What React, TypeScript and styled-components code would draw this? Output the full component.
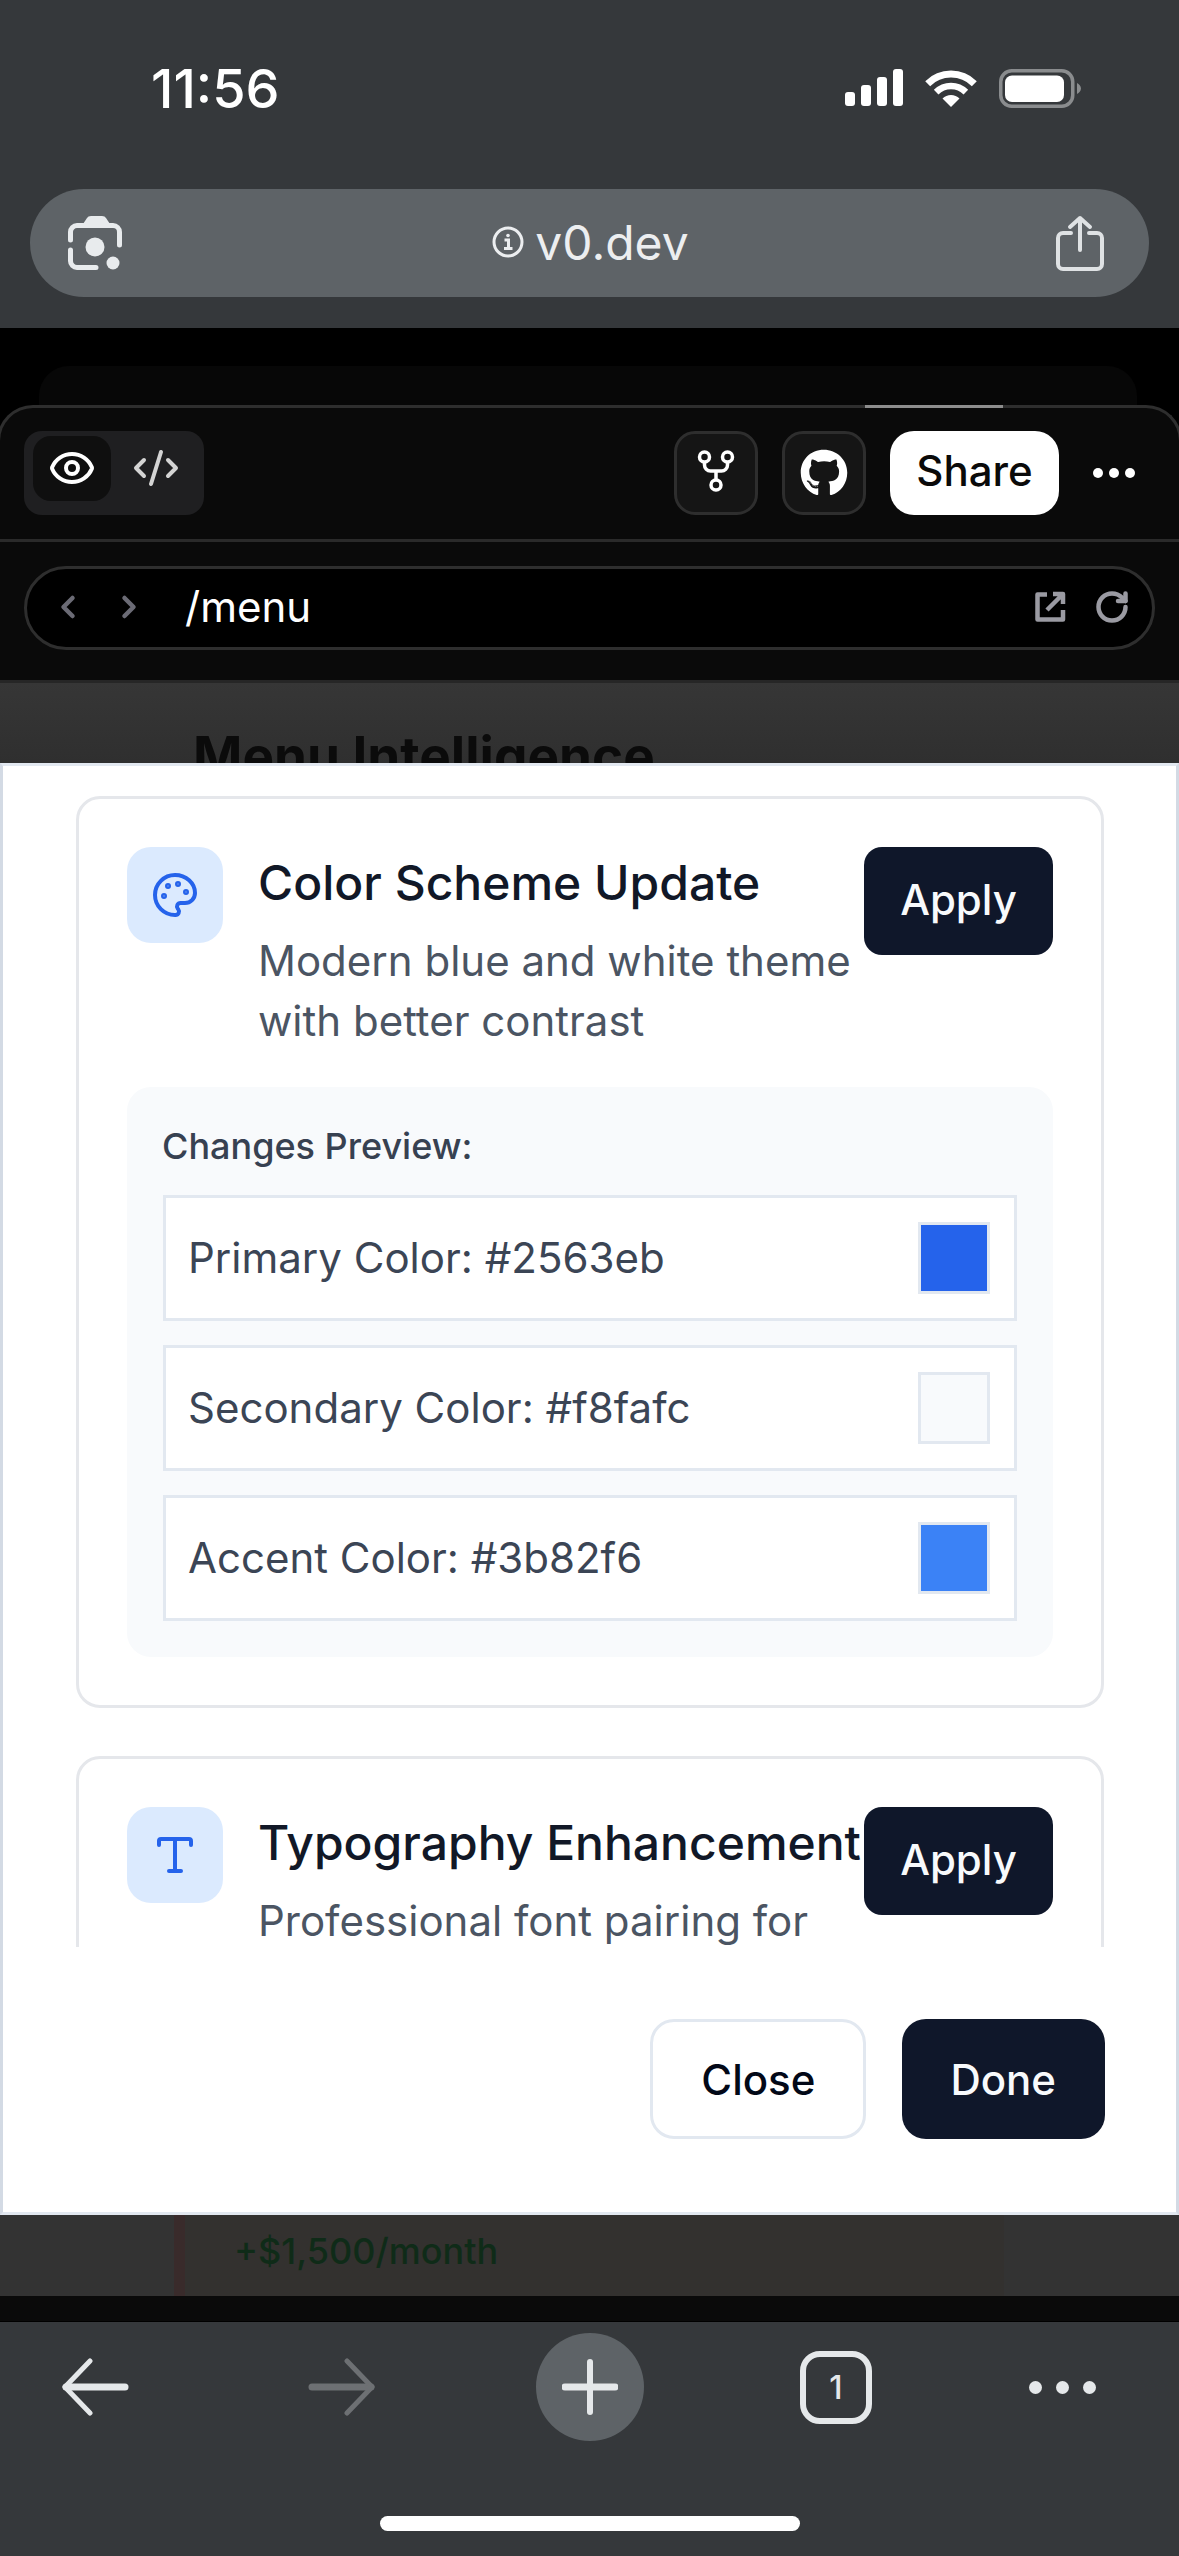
import React from 'react';
import styled, { createGlobalStyle } from 'styled-components';
import { ChevronLeft, ChevronRight, CodeXml, Eye, Palette, RotateCw, Type } from 'lucide-react';
import { FaGithub } from 'react-icons/fa';

const GlobalStyle = createGlobalStyle`
  html, body {
    margin: 0;
    padding: 0;
    background: #000;
  }
  * {
    box-sizing: border-box;
  }
`;

const Screen = styled.div`
  width: 1179px;
  height: 2556px;
  overflow: hidden;
  display: flex;
  flex-direction: column;
  background: #000;
  font-family: Inter, 'Liberation Sans', sans-serif;
`;

const BrowserTop = styled.header`
  height: 328px;
  background: #35383b;
`;

const StatusBar = styled.div`
  height: 189px;
  padding: 0 98px 13px 151px;
  display: flex;
  align-items: center;
  justify-content: space-between;
`;

const Clock = styled.span`
  font-size: 54px;
  font-weight: 500;
  color: #fff;
`;

const StatusIcons = styled.div`
  display: flex;
  align-items: center;
  gap: 22px;
`;

const UrlBar = styled.div`
  height: 108px;
  margin: 0 30px;
  padding: 0 44px 0 34px;
  border-radius: 54px;
  background: #5e6367;
  display: flex;
  align-items: center;
  justify-content: space-between;
`;

const UrlText = styled.div`
  display: flex;
  align-items: center;
  gap: 11px;
  padding-bottom: 2px;
  font-size: 48px;
  color: #eceef0;
`;

const Behind = styled.div`
  height: 77px;
  padding: 38px 42px 0 39px;
  background: #000;
`;

const BehindCard = styled.div`
  height: 39px;
  border-radius: 30px 30px 0 0;
  background: #070707;
`;

const Panel = styled.section`
  position: relative;
  flex: none;
  width: calc(100% + 6px);
  margin-left: -3px;
  background: #0a0a0a;
  border: 3px solid #2e2e2e;
  border-bottom: none;
  border-radius: 36px 36px 0 0;
`;

const Glint = styled.i`
  position: absolute;
  top: -3px;
  left: 865px;
  width: 138px;
  height: 3px;
  background: #8d8d8d;
`;

const ToolRow = styled.div`
  height: 134px;
  padding: 0 44px 2px 24px;
  display: flex;
  align-items: center;
  justify-content: space-between;
  border-bottom: 3px solid #2a2a2a;
`;

const ViewTabs = styled.div`
  width: 180px;
  height: 84px;
  padding: 5px 0 14px 9px;
  border-radius: 18px;
  background: #1f1f21;
  display: flex;
  gap: 6px;
  color: #d4d4d4;
`;

const ViewTab = styled.div<{ $active?: boolean }>`
  width: 78px;
  display: flex;
  align-items: center;
  justify-content: center;
  border-radius: 18px;
  background: ${(p) => (p.$active ? '#0f0f0f' : 'transparent')};
  color: ${(p) => (p.$active ? '#fff' : '#d4d4d4')};
`;

const Actions = styled.div`
  display: flex;
  align-items: center;
  gap: 24px;
`;

const IconButton = styled.button`
  width: 84px;
  height: 84px;
  padding: 0;
  border: 3px solid #2e2e2e;
  border-radius: 21px;
  background: #151515;
  color: #fff;
  display: flex;
  align-items: center;
  justify-content: center;
`;

const ShareButton = styled.button`
  width: 169px;
  height: 84px;
  border: none;
  border-radius: 24px;
  background: #fff;
  color: #0a0a0a;
  font-family: inherit;
  font-size: 42px;
  font-weight: 500;
  padding: 0 0 5px;
`;

const MoreDots = styled.div`
  display: flex;
  gap: 6px;
  margin-left: 10px;
`;

const Dot = styled.i`
  width: 10px;
  height: 10px;
  border-radius: 50%;
  background: #fff;
`;

const AddressRow = styled.div`
  height: 141px;
  padding: 24px 24px 0;
  border-bottom: 3px solid #262626;
`;

const AddressPill = styled.div`
  height: 84px;
  padding: 0 22px 2px 23px;
  border: 3px solid #2e2e2e;
  border-radius: 42px;
  background: #000;
  display: flex;
  align-items: center;
  gap: 25px;
  color: #6b6b75;
`;

const Path = styled.span`
  margin-left: 13px;
  padding-bottom: 2px;
  flex: 1;
  font-size: 42px;
  color: #fff;
`;

const PillTools = styled.div`
  display: flex;
  align-items: center;
  gap: 26px;
  color: #9a9aa2;
`;

const PeekTop = styled.div`
  flex: none;
  height: 80px;
  overflow: hidden;
  padding: 47px 0 0 193px;
  background: linear-gradient(#363636, #2f2f2f);
`;

const PeekHeading = styled.h1`
  margin: 0;
  font-size: 53px;
  line-height: 1;
  font-weight: 700;
  color: #0b0b0b;
`;

const Modal = styled.div`
  flex: none;
  height: 1452px;
  border: 3px solid #e2e8f0;
  border-left-color: #d3dae4;
  border-right-color: #d3dae4;
  background: #fff;
  display: flex;
  flex-direction: column;
`;

const ScrollArea = styled.div`
  height: 1181px;
  overflow: hidden;
  padding: 30px 72px 0 73px;
  display: flex;
  flex-direction: column;
  gap: 48px;
`;

const Card = styled.article`
  flex: none;
  padding: 48px;
  border: 3px solid #e5e7eb;
  border-radius: 24px;
`;

const CardHead = styled.div`
  display: flex;
  align-items: flex-start;
  gap: 35px;
`;

const IconTile = styled.div`
  flex: none;
  width: 96px;
  height: 96px;
  border-radius: 24px;
  background: #dbeafe;
  color: #2563eb;
  display: flex;
  align-items: center;
  justify-content: center;
`;

const CardText = styled.div`
  flex: 1;
  min-width: 0;
  margin-right: -35px;
`;

const CardTitle = styled.h3`
  margin: 0;
  font-size: 48px;
  line-height: 72px;
  font-weight: 500;
  color: #111827;
  white-space: nowrap;
`;

const CardDescription = styled.p`
  margin: 12px 0 0;
  font-size: 42px;
  line-height: 60px;
  color: #4b5563;
`;

const ApplyButton = styled.button`
  flex: none;
  width: 189px;
  height: 108px;
  padding: 0 0 3px;
  border: none;
  border-radius: 18px;
  background: #0f172a;
  color: #f8fafc;
  font-family: inherit;
  font-size: 42px;
  font-weight: 500;
`;

const PreviewBox = styled.div`
  margin-top: 36px;
  padding: 36px;
  border-radius: 24px;
  background: #f8fafc;
`;

const PreviewLabel = styled.div`
  height: 48px;
  margin-left: -1px;
  font-size: 36px;
  line-height: 46px;
  font-weight: 500;
  color: #374151;
`;

const PreviewList = styled.div`
  margin-top: 24px;
  display: flex;
  flex-direction: column;
  gap: 24px;
`;

const PreviewRow = styled.div`
  height: 126px;
  padding: 0 24px 0 22px;
  border: 3px solid #e2e8f0;
  background: #fff;
  display: flex;
  align-items: center;
  justify-content: space-between;
  font-size: 42px;
  color: #3b4555;
`;

const RowLabel = styled.span`
  padding-bottom: 2px;
`;

const Swatch = styled.i<{ $color: string }>`
  width: 72px;
  height: 72px;
  border: 3px solid #e2e8f0;
  background: ${(p) => p.$color};
`;

const ModalFooter = styled.div`
  flex: 1;
  padding: 72px 71px 0 0;
  display: flex;
  justify-content: flex-end;
  gap: 36px;
`;

const FooterButton = styled.button<{ $primary?: boolean }>`
  height: 120px;
  padding: ${(p) => (p.$primary ? '0 49px 0 48px' : '0 48px')};
  border-radius: 24px;
  border: ${(p) => (p.$primary ? 'none' : '3px solid #e2e8f0')};
  background: ${(p) => (p.$primary ? '#0f172a' : '#fff')};
  color: ${(p) => (p.$primary ? '#f8fafc' : '#020817')};
  font-family: inherit;
  font-size: 42px;
  font-weight: 500;
`;

const PeekBottom = styled.div`
  flex: none;
  height: 81px;
  padding-left: 174px;
  background: #333;
`;

const PeekRow = styled.div`
  width: 830px;
  height: 100%;
  padding: 0 0 10px 49px;
  border-left: 11px solid #392b2b;
  background: #33312f;
  display: flex;
  align-items: center;
  font-size: 36px;
  font-weight: 500;
  color: #0f2b18;
`;

const PanelEnd = styled.div`
  flex: none;
  height: 25px;
  background: #0a0a0a;
`;

const BrowserBottom = styled.footer`
  flex: 1;
  border-top: 1px solid #000;
  padding-top: 11px;
  background: #35383b;
`;

const NavBar = styled.nav`
  height: 108px;
  display: grid;
  grid-template-columns: 190px 304px 192px 300px 152px;
  justify-items: center;
  align-items: center;
`;

const PlusCircle = styled.div`
  width: 108px;
  height: 108px;
  border-radius: 50%;
  background: #5e6367;
  display: flex;
  align-items: center;
  justify-content: center;
`;

const TabCount = styled.div`
  width: 72px;
  height: 73px;
  border: 6px solid #e5e8ea;
  border-radius: 20px;
  display: flex;
  align-items: center;
  justify-content: center;
  font-size: 32px;
  font-weight: 500;
  color: #e5e8ea;
`;

const NavDots = styled.div`
  display: flex;
  gap: 14px;
`;

const NavDot = styled.i`
  width: 13px;
  height: 13px;
  border-radius: 50%;
  background: #e5e8ea;
`;

const HomeIndicator = styled.div`
  width: 420px;
  height: 15px;
  margin: 75px auto 0 380px;
  border-radius: 8px;
  background: #fff;
`;

const SignalIcon = () => (
  <svg width="58" height="38" viewBox="0 0 58 38" fill="#fff">
    <rect x="0" y="23" width="10" height="14" rx="3" />
    <rect x="16" y="16" width="10" height="21" rx="3" />
    <rect x="32" y="8" width="10" height="29" rx="3" />
    <rect x="48" y="0" width="10" height="37" rx="3" />
  </svg>
);

const WifiIcon = () => (
  <svg width="52" height="39" viewBox="0 0 52 39" fill="none" stroke="#fff">
    <path d="M2.7 14.7A33 33 0 0 1 49.3 14.7" strokeWidth="7" />
    <path d="M11.15 23.15A21 21 0 0 1 40.85 23.15" strokeWidth="6.5" />
    <path d="M26 38L17.5 29.5A12 12 0 0 1 34.5 29.5Z" fill="#fff" stroke="none" />
  </svg>
);

const BatteryIcon = () => (
  <svg width="82" height="39" viewBox="0 0 82 39">
    <rect x="1.75" y="1.75" width="72" height="35.5" rx="11" fill="none" stroke="#8a8c8e" strokeWidth="3.5" />
    <rect x="6" y="6.5" width="59" height="26.5" rx="7" fill="#fff" />
    <path d="M78 14c2 1 4 3 4 5.500s-2 4.500-4 5.500z" fill="#8a8c8e" />
  </svg>
);

const LensIcon = () => (
  <svg width="62" height="60" viewBox="0 0 62 60" fill="none" stroke="#e8ebed" strokeWidth="5" strokeLinecap="round">
    <path d="M6.500 27V19a6.500 6.500 0 0 1 6.500-6.500H49a6.500 6.500 0 0 1 6.500 6.500V32" />
    <path d="M6.500 37V48a6.500 6.500 0 0 0 6.500 6.500H32" />
    <path d="M19 11L23 5Q24 3 27 3H38Q41 3 42 5L46 11Z" fill="#e8ebed" stroke="none" />
    <circle cx="31" cy="34" r="9.500" fill="#e8ebed" stroke="none" />
    <circle cx="49" cy="50" r="6.500" fill="#e8ebed" stroke="none" />
  </svg>
);

const InfoIcon = () => (
  <svg width="32" height="32" viewBox="0 0 32 32" fill="none" stroke="#eceef0" strokeWidth="3">
    <circle cx="16" cy="16" r="14" />
    <path d="M12.500 14h4v8M12 22.500h8.500" />
    <circle cx="16" cy="9.500" r="1.800" fill="#eceef0" stroke="none" />
  </svg>
);

const ShareIcon = () => (
  <svg width="50" height="56" viewBox="0 0 50 56" fill="none" stroke="#dfe2e4" strokeWidth="4" strokeLinecap="round" strokeLinejoin="round">
    <path d="M16 18H8a5 5 0 0 0-5 5V49a5 5 0 0 0 5 5H42a5 5 0 0 0 5-5V23a5 5 0 0 0-5-5H34" />
    <path d="M25 35V3M15 12L25 3L35 12" />
  </svg>
);

const ForkIcon = () => (
  <svg width="48" height="48" viewBox="0 0 48 48" fill="none" stroke="currentColor" strokeWidth="3.500">
    <circle cx="12.500" cy="8" r="5" />
    <circle cx="35.500" cy="8" r="5" />
    <circle cx="24" cy="36" r="5" />
    <path d="M12.500 13V16a6 6 0 0 0 6 6H29.500a6 6 0 0 0 6-6V13" />
    <path d="M24 22V31" />
  </svg>
);

const ExternalIcon = () => (
  <svg width="36" height="36" viewBox="0 0 36 36" fill="none" stroke="currentColor" strokeWidth="4.500" strokeLinejoin="round">
    <path d="M15 5.500H5.500V30.500H31V21" />
    <path d="M15 21L30 6M21 5H31V15" />
  </svg>
);

const ArrowIcon = ({ color, flip }: { color: string; flip?: boolean }) => (
  <svg width="68" height="58" viewBox="0 0 68 58" fill="none" stroke={color} strokeLinecap="round" style={flip ? { transform: 'scaleX(-1)' } : undefined}>
    <path d="M5 29H64" strokeWidth="7" />
    <path d="M29 3L4 29L29 55" strokeWidth="5" strokeLinejoin="round" />
  </svg>
);

const PlusIcon = () => (
  <svg width="56" height="56" viewBox="0 0 56 56" stroke="#e5e8ea" strokeLinecap="round">
    <path d="M3 28H53" strokeWidth="7" />
    <path d="M28 3V53" strokeWidth="6" />
  </svg>
);

const swatches = [
  { label: 'Primary Color: #2563eb', color: '#2563eb' },
  { label: 'Secondary Color: #f8fafc', color: '#f8fafc' },
  { label: 'Accent Color: #3b82f6', color: '#3b82f6' },
];

const App: React.FC = () => {
  return (
    <Screen>
      <GlobalStyle />
      <BrowserTop>
        <StatusBar>
          <Clock>11:56</Clock>
          <StatusIcons>
            <SignalIcon />
            <WifiIcon />
            <BatteryIcon />
          </StatusIcons>
        </StatusBar>
        <UrlBar>
          <LensIcon />
          <UrlText>
            <InfoIcon />
            v0.dev
          </UrlText>
          <ShareIcon />
        </UrlBar>
      </BrowserTop>

      <Behind>
        <BehindCard />
      </Behind>

      <Panel>
        <Glint />
        <ToolRow>
          <ViewTabs>
            <ViewTab $active>
              <Eye size={48} strokeWidth={2} />
            </ViewTab>
            <ViewTab>
              <CodeXml size={48} strokeWidth={2} />
            </ViewTab>
          </ViewTabs>
          <Actions>
            <IconButton>
              <ForkIcon />
            </IconButton>
            <IconButton>
              <FaGithub size={48} />
            </IconButton>
            <ShareButton>Share</ShareButton>
            <MoreDots>
              <Dot />
              <Dot />
              <Dot />
            </MoreDots>
          </Actions>
        </ToolRow>
        <AddressRow>
          <AddressPill>
            <ChevronLeft size={36} strokeWidth={3} />
            <ChevronRight size={36} strokeWidth={3} />
            <Path>/menu</Path>
            <PillTools>
              <ExternalIcon />
              <RotateCw size={36} strokeWidth={3} />
            </PillTools>
          </AddressPill>
        </AddressRow>
      </Panel>

      <PeekTop>
        <PeekHeading>Menu Intelligence</PeekHeading>
      </PeekTop>

      <Modal>
        <ScrollArea>
          <Card>
            <CardHead>
              <IconTile>
                <Palette size={48} />
              </IconTile>
              <CardText>
                <CardTitle>Color Scheme Update</CardTitle>
                <CardDescription>Modern blue and white theme with better contrast</CardDescription>
              </CardText>
              <ApplyButton>Apply</ApplyButton>
            </CardHead>
            <PreviewBox>
              <PreviewLabel>Changes Preview:</PreviewLabel>
              <PreviewList>
                {swatches.map((s) => (
                  <PreviewRow key={s.label}>
                    <RowLabel>{s.label}</RowLabel>
                    <Swatch $color={s.color} />
                  </PreviewRow>
                ))}
              </PreviewList>
            </PreviewBox>
          </Card>
          <Card>
            <CardHead>
              <IconTile>
                <Type size={48} />
              </IconTile>
              <CardText>
                <CardTitle>Typography Enhancement</CardTitle>
                <CardDescription>Professional font pairing for better readability</CardDescription>
              </CardText>
              <ApplyButton>Apply</ApplyButton>
            </CardHead>
          </Card>
        </ScrollArea>
        <ModalFooter>
          <FooterButton>Close</FooterButton>
          <FooterButton $primary>Done</FooterButton>
        </ModalFooter>
      </Modal>

      <PeekBottom>
        <PeekRow>+$1,500/month</PeekRow>
      </PeekBottom>
      <PanelEnd />

      <BrowserBottom>
        <NavBar>
          <ArrowIcon color="#e5e8ea" />
          <ArrowIcon color="#6d7073" flip />
          <PlusCircle>
            <PlusIcon />
          </PlusCircle>
          <TabCount>1</TabCount>
          <NavDots>
            <NavDot />
            <NavDot />
            <NavDot />
          </NavDots>
        </NavBar>
        <HomeIndicator />
      </BrowserBottom>
    </Screen>
  );
};

export default App;
